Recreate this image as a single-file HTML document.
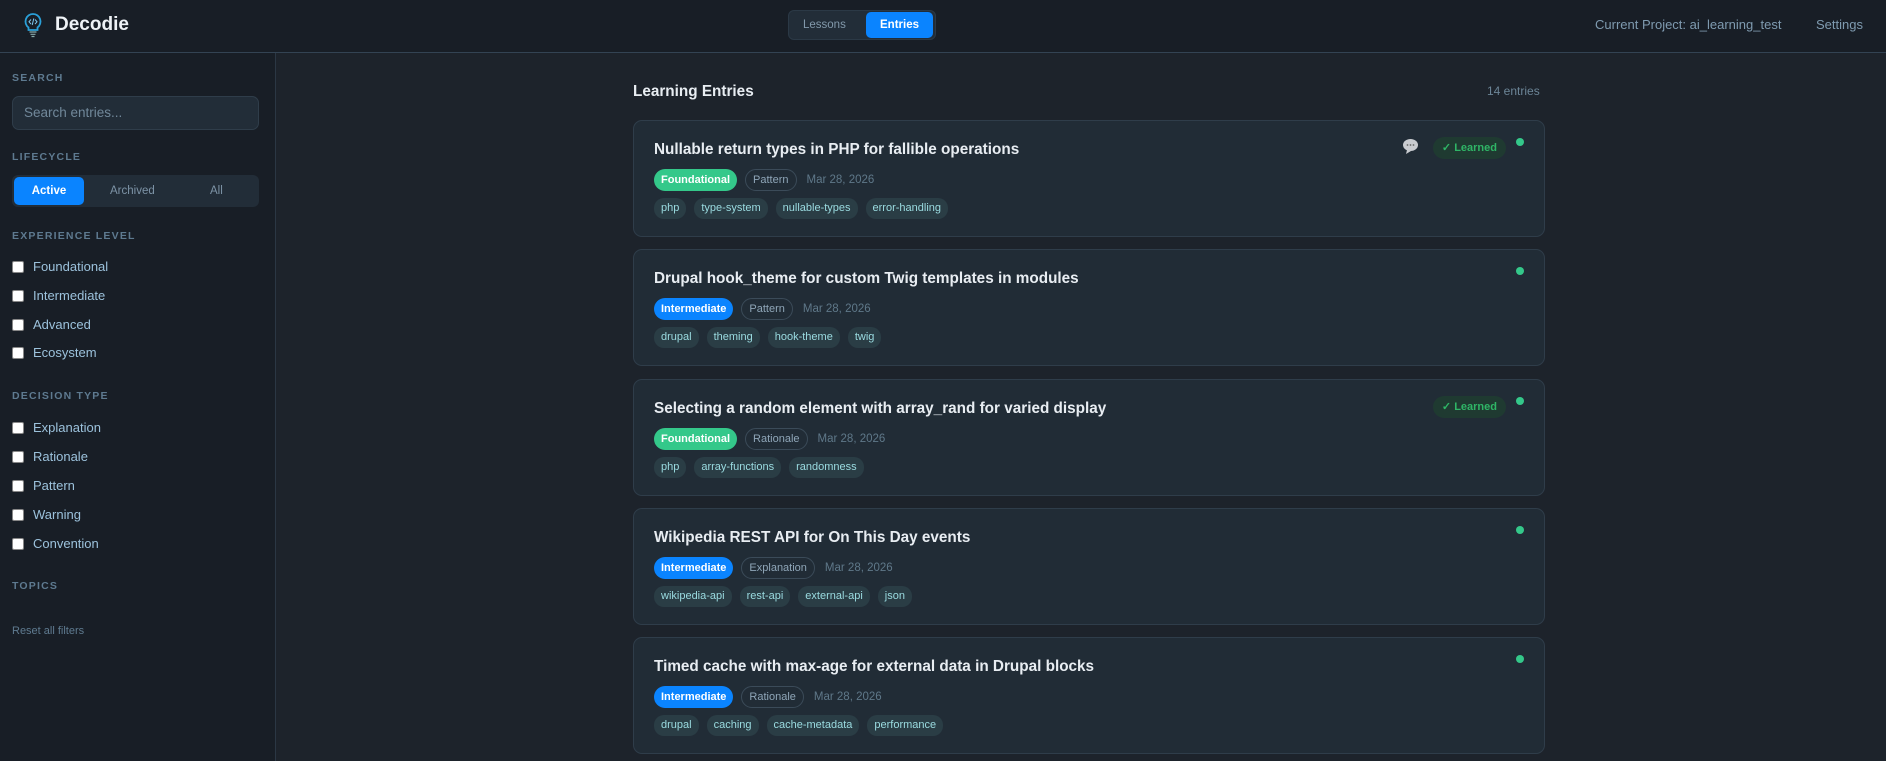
<!DOCTYPE html>
<html><head><meta charset="utf-8"><style>
*{box-sizing:border-box;margin:0;padding:0}
body{width:1886px;height:761px;overflow:hidden;background:#1d232b;font-family:"Liberation Sans",sans-serif;position:relative}
.hdr{position:absolute;left:0;top:0;width:1886px;height:53px;background:#181e26;border-bottom:1px solid #334353}
.side{position:absolute;left:0;top:53px;width:276px;height:708px;background:#181e26;border-right:1px solid #2b3744}
.abs{position:absolute}
.lbl{position:absolute;left:12px;font-size:10.5px;font-weight:bold;letter-spacing:1.2px;color:#5e7a90}
.cb{position:absolute;left:12px;font-size:13px;color:#9cc2dc;display:flex;align-items:center}
.cb i{display:inline-block;width:12px;height:12px;background:#fff;border-radius:2px;margin-right:9px;border:1px solid #888}
.card{position:absolute;left:633px;width:912px;height:117px;background:#212c36;border:1px solid #2f3d4a;border-radius:9px}
.card h3{position:absolute;left:20px;top:20px;font-size:15.3px;font-weight:bold;color:#e8edf2}
.row{position:absolute;left:20px;display:flex;align-items:center;gap:8px}
.b{height:22px;border-radius:11px;padding:0 7px;font-size:11px;line-height:22px}
.f{background:#34c88a;color:#fff;font-weight:bold}
.i{background:#0a84ff;color:#fff;font-weight:bold}
.o{border:1px solid #3b4b59;color:#8fa6b8;line-height:20px}
.d{font-size:11.5px;color:#5f7889;margin-left:2px}
.t{height:21px;border-radius:10px;padding:0 7px;font-size:11px;line-height:21px;background:#2a3d45;color:#9adbe0}
.dot{position:absolute;right:20px;top:17px;width:8px;height:8px;border-radius:50%;background:#34c88a}
.lr{position:absolute;right:38px;top:16px;height:22px;border-radius:11px;background:#1f3a31;color:#2fb566;font-size:11px;font-weight:bold;line-height:22px;padding:0 9px}
</style></head><body>
<div class="hdr">
 <svg class="abs" style="left:23px;top:12px" width="20" height="26" viewBox="0 0 20 26"><path d="M10 2a7.5 7.5 0 0 0-4.5 13.5V18h9v-2.5A7.5 7.5 0 0 0 10 2z" fill="none" stroke="#2aa0d8" stroke-width="1.8"/><path d="M8 7.5l-2 2.3 2 2.3M12 7.5l2 2.3-2 2.3M10.8 6.5l-1.6 6.5" fill="none" stroke="#7fc8f0" stroke-width="1"/><path d="M6.5 20h7M7.5 22.3h5M8.5 24.5h3" stroke="#8aa" stroke-width="1.2"/></svg>
 <div class="abs" style="left:55px;top:14px;font-size:19px;font-weight:bold;color:#eef2f6">Decodie</div>
 <div class="abs" style="left:788px;top:10px;width:148px;height:30px;background:#222d38;border-radius:6px;border:1px solid #2b3946"></div>
 <div class="abs" style="left:803px;top:12px;font-size:11.5px;line-height:26px;color:#8299ab">Lessons</div>
 <div class="abs" style="left:866px;top:12px;width:67px;height:26px;background:#0a84ff;border-radius:5px;color:#fff;font-size:11.5px;font-weight:bold;text-align:center;line-height:26px">Entries</div>
 <div class="abs" style="left:1595px;top:17px;font-size:13px;color:#7f9bb0">Current Project: ai_learning_test</div>
 <div class="abs" style="left:1816px;top:17px;font-size:13px;color:#7f9bb0">Settings</div>
</div>
<div class="side">
 <div class="lbl" style="top:19px">SEARCH</div>
 <div class="abs" style="left:12px;top:43px;width:247px;height:34px;background:#222d38;border:1px solid #2f3d4a;border-radius:7px;padding-left:11px;line-height:32px;font-size:13.5px;color:#71889a">Search entries...</div>
 <div class="lbl" style="top:98px">LIFECYCLE</div>
 <div class="abs" style="left:12px;top:122px;width:247px;height:32px;background:#222d38;border-radius:6px"></div>
 <div class="abs" style="left:14px;top:124px;width:70px;height:28px;background:#0a84ff;border-radius:5px;color:#fff;font-weight:bold;font-size:11.5px;text-align:center;line-height:28px">Active</div>
 <div class="abs" style="left:110px;top:124px;font-size:11.5px;line-height:28px;color:#7d93a6">Archived</div>
 <div class="abs" style="left:210px;top:124px;font-size:11.5px;line-height:28px;color:#7d93a6">All</div>
 <div class="lbl" style="top:177px">EXPERIENCE LEVEL</div>
 <div class="cb" style="top:206px"><i></i>Foundational</div>
 <div class="cb" style="top:235px"><i></i>Intermediate</div>
 <div class="cb" style="top:264px"><i></i>Advanced</div>
 <div class="cb" style="top:292px"><i></i>Ecosystem</div>
 <div class="lbl" style="top:337px">DECISION TYPE</div>
 <div class="cb" style="top:367px"><i></i>Explanation</div>
 <div class="cb" style="top:396px"><i></i>Rationale</div>
 <div class="cb" style="top:425px"><i></i>Pattern</div>
 <div class="cb" style="top:454px"><i></i>Warning</div>
 <div class="cb" style="top:483px"><i></i>Convention</div>
 <div class="lbl" style="top:527px">TOPICS</div>
 <div class="abs" style="left:12px;top:572px;font-size:11px;color:#5f7b90">Reset all filters</div>
</div>
<div class="abs" style="left:633px;top:83px;font-size:15.3px;font-weight:bold;color:#e8edf2">Learning Entries</div>
<div class="abs" style="left:1487px;top:84px;font-size:12px;color:#6c8597">14 entries</div>

<div class="card" style="top:120px"><h3>Nullable return types in PHP for fallible operations</h3>
 <svg class="abs" style="left:768px;top:17px" width="17" height="16" viewBox="0 0 17 16"><ellipse cx="8.5" cy="7" rx="7.5" ry="6" fill="#c9ccd0"/><path d="M5 12l-1 4 5-3z" fill="#c9ccd0"/><circle cx="5.5" cy="7" r=".9" fill="#666"/><circle cx="8.5" cy="7" r=".9" fill="#666"/><circle cx="11.5" cy="7" r=".9" fill="#666"/></svg>
 <div class="lr">✓ Learned</div><div class="dot"></div>
 <div class="row" style="top:48px"><span class="b f">Foundational</span><span class="b o">Pattern</span><span class="d">Mar 28, 2026</span></div>
 <div class="row" style="top:77px"><span class="t">php</span><span class="t">type-system</span><span class="t">nullable-types</span><span class="t">error-handling</span></div>
</div>
<div class="card" style="top:249px"><h3>Drupal hook_theme for custom Twig templates in modules</h3><div class="dot"></div>
 <div class="row" style="top:48px"><span class="b i">Intermediate</span><span class="b o">Pattern</span><span class="d">Mar 28, 2026</span></div>
 <div class="row" style="top:77px"><span class="t">drupal</span><span class="t">theming</span><span class="t">hook-theme</span><span class="t">twig</span></div>
</div>
<div class="card" style="top:379px"><h3>Selecting a random element with array_rand for varied display</h3>
 <div class="lr">✓ Learned</div><div class="dot"></div>
 <div class="row" style="top:48px"><span class="b f">Foundational</span><span class="b o">Rationale</span><span class="d">Mar 28, 2026</span></div>
 <div class="row" style="top:77px"><span class="t">php</span><span class="t">array-functions</span><span class="t">randomness</span></div>
</div>
<div class="card" style="top:508px"><h3>Wikipedia REST API for On This Day events</h3><div class="dot"></div>
 <div class="row" style="top:48px"><span class="b i">Intermediate</span><span class="b o">Explanation</span><span class="d">Mar 28, 2026</span></div>
 <div class="row" style="top:77px"><span class="t">wikipedia-api</span><span class="t">rest-api</span><span class="t">external-api</span><span class="t">json</span></div>
</div>
<div class="card" style="top:637px"><h3>Timed cache with max-age for external data in Drupal blocks</h3><div class="dot"></div>
 <div class="row" style="top:48px"><span class="b i">Intermediate</span><span class="b o">Rationale</span><span class="d">Mar 28, 2026</span></div>
 <div class="row" style="top:77px"><span class="t">drupal</span><span class="t">caching</span><span class="t">cache-metadata</span><span class="t">performance</span></div>
</div>
</body></html>
